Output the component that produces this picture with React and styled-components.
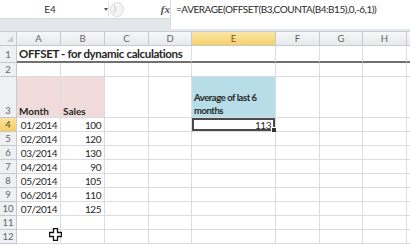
import React from "react";
import styled, { createGlobalStyle, css } from "styled-components";

const GlobalStyle = createGlobalStyle`
  html, body {
    margin: 0;
    padding: 0;
    background: #ffffff;
    overflow: hidden;
  }
  body {
    font-family: "Lato", "Liberation Sans", sans-serif;
  }
`;

const COLS = ["A", "B", "C", "D", "E", "F", "G", "H", ""];
const COL_WIDTHS = "17px 44px 44px 44px 43px 84px 44px 43px 44px 1fr";
const ROW_HEIGHTS = "14px 17px 14px 41px 14px repeat(8, 14px)";

const data = [
  ["01/2014", 100],
  ["02/2014", 120],
  ["03/2014", 130],
  ["04/2014", 90],
  ["05/2014", 105],
  ["06/2014", 110],
  ["07/2014", 125],
];

const App = () => {
  return (
    <>
      <GlobalStyle />
      <Window>
        <FormulaBar>
          <LeftPart>
            <TopStrip>
              <NameBox>
                <NameText>E4</NameText>
                <DropArrow />
              </NameBox>
              <Divider />
              <RoundButton>
                <svg width="12" height="14" viewBox="0 0 12 14">
                  <path d="M3 3 Q6 7 3 11" fill="none" stroke="#c8c8c8" strokeWidth="1" />
                </svg>
              </RoundButton>
              <FxLabel>fx</FxLabel>
            </TopStrip>
          </LeftPart>
          <FormulaInput>=AVERAGE(OFFSET(B3,COUNTA(B4:B15),0,-6,1))</FormulaInput>
        </FormulaBar>

        <Sheet>
          <Corner>
            <svg width="8" height="8" viewBox="0 0 8 8">
              <path d="M7 1 L7 7 L1 7 Z" fill="#c9c9c9" />
            </svg>
          </Corner>
          {COLS.map((c, i) => (
            <ColHeader key={`h-${i}`} $active={c === "E"}>
              {c}
            </ColHeader>
          ))}

          {/* row 1 */}
          <RowHeader>1</RowHeader>
          <Cell $span={4} $bold $big $thick>
            OFFSET - for dynamic calculations
          </Cell>
          {[...Array(5)].map((_, i) => (
            <Cell key={`r1-${i}`} $thick />
          ))}

          {/* row 2 */}
          <RowHeader>2</RowHeader>
          {[...Array(9)].map((_, i) => (
            <Cell key={`r2-${i}`} />
          ))}

          {/* row 3 */}
          <RowHeader $tall>3</RowHeader>
          <Cell $fill="#f2dcdb" $bold $bottom>
            Month
          </Cell>
          <Cell $fill="#f2dcdb" $bold $bottom>
            Sales
          </Cell>
          <Cell />
          <Cell />
          <Cell $fill="#b7dee8" $bold $bottom $wrap>
            Average of last 6 months
          </Cell>
          <Cell />
          <Cell />
          <Cell />
          <Cell />

          {data.map(([month, sales], r) => (
            <React.Fragment key={month}>
              <RowHeader $active={r === 0}>{r + 4}</RowHeader>
              <Cell $align="right" $num>{month}</Cell>
              <Cell $align="right" $num>{sales}</Cell>
              <Cell />
              <Cell />
              {r === 0 ? (
                <Cell $align="right" $num $selected>
                  113
                </Cell>
              ) : (
                <Cell />
              )}
              <Cell />
              <Cell />
              <Cell />
              <Cell />
            </React.Fragment>
          ))}

          {[11, 12].map((n) => (
            <React.Fragment key={n}>
              <RowHeader>{n}</RowHeader>
              {[...Array(9)].map((_, i) => (
                <Cell key={`r${n}-${i}`} />
              ))}
            </React.Fragment>
          ))}
        </Sheet>

        <Pointer>
          <svg width="13" height="13" viewBox="0 0 13 13">
            <path
              d="M4.5 0.5 H8.5 V4.5 H12.5 V8.5 H8.5 V12.5 H4.5 V8.5 H0.5 V4.5 H4.5 Z"
              fill="#ffffff"
              stroke="#111"
              strokeWidth="1.3"
              strokeLinejoin="round"
            />
          </svg>
        </Pointer>
      </Window>
    </>
  );
};

const Window = styled.div`
  position: relative;
  width: 410px;
  height: 245px;
  overflow: hidden;
  background: #fff;
`;

const FormulaBar = styled.div`
  display: flex;
  height: 32px;
  background: #e3e6ea;
  box-sizing: border-box;
  border-bottom: 1px solid #c9ccd0;
`;

const LeftPart = styled.div`
  width: 170px;
  display: flex;
  flex-direction: column;
`;

const TopStrip = styled.div`
  height: 19px;
  display: flex;
  align-items: center;
  background: #fff;
  border-bottom: 1px solid #d6d9dd;
  box-sizing: border-box;
`;

const NameBox = styled.div`
  width: 111px;
  height: 100%;
  display: flex;
  align-items: center;
`;

const NameText = styled.span`
  width: 100px;
  text-align: center;
  font-size: 10px;
  color: #333;
`;

const DropArrow = styled.span`
  margin-left: 4px;
  width: 0;
  height: 0;
  border-left: 2.5px solid transparent;
  border-right: 2.5px solid transparent;
  border-top: 3px solid #555;
`;

const Divider = styled.span`
  width: 1px;
  height: 15px;
  background: #e0e0e0;
`;

const RoundButton = styled.span`
  margin-left: 1px;
  width: 13px;
  height: 13px;
  border-radius: 50%;
  background: #f4f4f4;
  border: 1px solid #dedede;
  display: flex;
  align-items: center;
  justify-content: center;
`;

const FxLabel = styled.span`
  margin-left: 37px;
  font-family: "Liberation Serif", serif;
  font-style: italic;
  font-weight: bold;
  font-size: 11px;
  color: #555;
`;

const FormulaInput = styled.div`
  flex: 1;
  height: 29px;
  background: #fff;
  border-left: 1px solid #dcdcdc;
  box-sizing: border-box;
  padding: 3px 0 0 5px;
  font-size: 10px;
  letter-spacing: -0.45px;
  color: #2a2a2a;
  white-space: nowrap;
`;

const Sheet = styled.div`
  display: grid;
  grid-template-columns: ${COL_WIDTHS};
  grid-template-rows: ${ROW_HEIGHTS};
  background: #fff;
`;

const headerBase = css`
  box-sizing: border-box;
  border-right: 1px solid #c6c9cd;
  border-bottom: 1px solid #c6c9cd;
  display: flex;
  align-items: center;
  justify-content: center;
  font-size: 9.5px;
  color: #555;
`;

const Corner = styled.div`
  ${headerBase};
  background: #eef0f2;
  align-items: flex-end;
  justify-content: flex-end;
  padding: 0 2px 2px 0;
`;

const ColHeader = styled.div`
  ${headerBase};
  background: ${(p) =>
    p.$active
      ? "linear-gradient(#fbe6a6, #f6cf6a)"
      : "linear-gradient(#f6f7f8, #e6e8eb)"};
  color: ${(p) => (p.$active ? "#6a5a30" : "#666")};
`;

const RowHeader = styled.div`
  ${headerBase};
  background: ${(p) => (p.$active ? "linear-gradient(#fbe3a0, #f5cd68)" : "#eef0f2")};
  align-items: ${(p) => (p.$tall ? "flex-end" : "center")};
  padding-bottom: ${(p) => (p.$tall ? "1px" : "0")};
  color: ${(p) => (p.$active ? "#5a4a20" : "#666")};
`;

const Cell = styled.div`
  position: relative;
  box-sizing: border-box;
  grid-column: ${(p) => (p.$span ? `span ${p.$span}` : "auto")};
  border-right: 1px solid #dadcdf;
  border-bottom: ${(p) => (p.$thick ? "2px solid #707070" : "1px solid #dadcdf")};
  background: ${(p) => p.$fill || "transparent"};
  display: flex;
  align-items: ${(p) => (p.$bottom ? "flex-end" : "center")};
  justify-content: ${(p) => (p.$align === "right" ? "flex-end" : "flex-start")};
  padding: 0 3px 0 2px;
  font-size: ${(p) => (p.$big ? "11.5px" : p.$wrap ? "9.5px" : "10px")};
  letter-spacing: ${(p) =>
    p.$big ? "-0.35px" : p.$wrap ? "-0.45px" : p.$num ? "-0.45px" : "0"};
  font-weight: ${(p) => (p.$bold ? 700 : 400)};
  color: #262626;
  white-space: ${(p) => (p.$wrap ? "normal" : "nowrap")};
  line-height: ${(p) => (p.$wrap ? "13px" : "normal")};
  ${(p) =>
    p.$selected &&
    css`
      box-shadow: inset 0 0 0 2px #4a4a4a;
      padding-right: 4px;
      &::after {
        content: "";
        position: absolute;
        right: -2px;
        bottom: -2px;
        width: 4px;
        height: 4px;
        background: #333;
        border: 1px solid #fff;
      }
    `}
`;

const Pointer = styled.div`
  position: absolute;
  left: 49px;
  top: 228px;
  width: 13px;
  height: 13px;
  line-height: 0;
`;

export default App;
